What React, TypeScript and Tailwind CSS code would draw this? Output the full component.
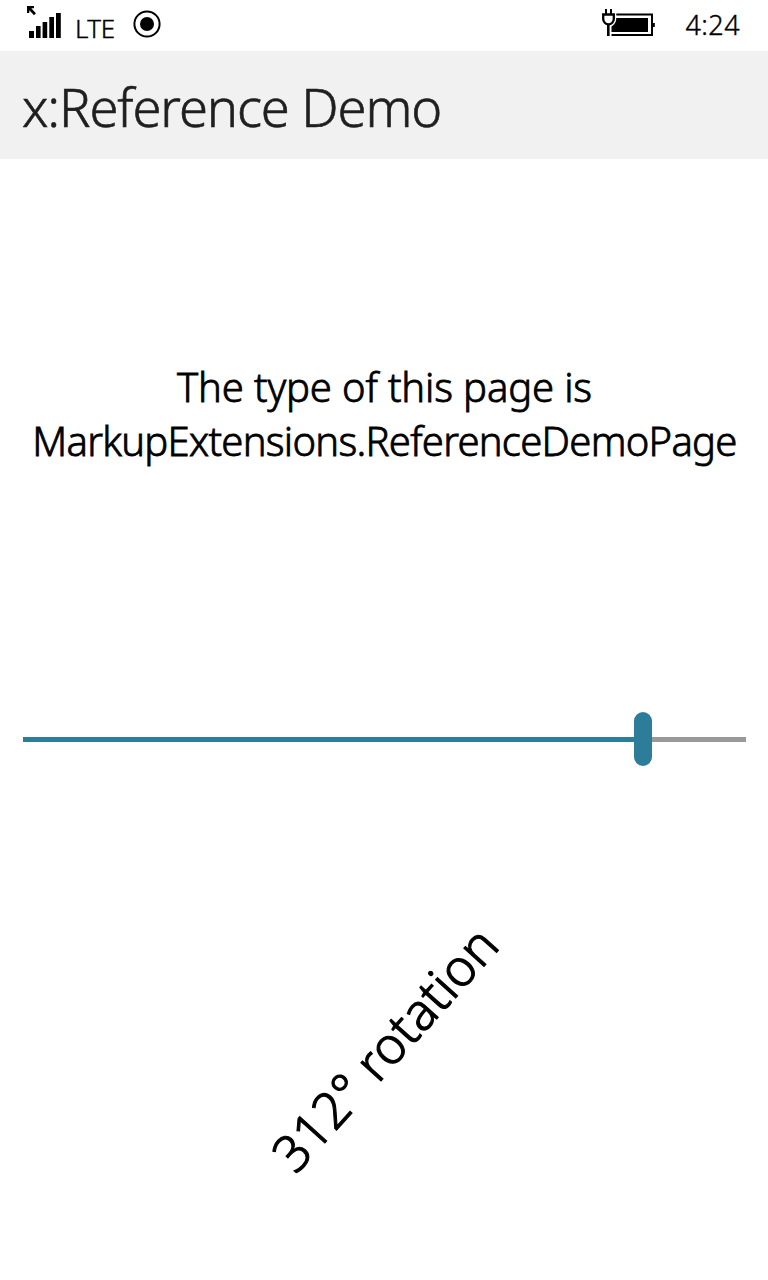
function SignalIcon() {
  return (
    <svg width="36" height="34" viewBox="0 0 36 34" fill="#000">
      <path d="M1 0H8V2.3H5.3L9.9 7.3L8 9.2L3.3 4.2V7H1Z" />
      <path d="M3 25h5v7H3zM10 20h4.6v12H10zM16.6 16h4.6v16h-4.6zM23.3 11h4.7v21h-4.7zM30 7h4.8v25H30z" />
    </svg>
  );
}

function RecordIcon() {
  return (
    <svg width="28" height="28" viewBox="0 0 28 28">
      <circle cx="14" cy="14" r="12.6" fill="none" stroke="#000" strokeWidth="2" />
      <circle cx="14" cy="14" r="7" fill="#000" />
    </svg>
  );
}

function BatteryIcon() {
  return (
    <svg width="53" height="28" viewBox="0 0 53 28" fill="none" stroke="#000" strokeWidth="2">
      <path d="M4 0v5M9 0v5" />
      <path d="M6.3 16v11" strokeWidth="2.6" />
      <path d="M1.2 5.5H11.8V10a5.3 5.3 0 0 1-10.6 0Z" strokeWidth="2.3" />
      <path d="M14.3 5.5H50V26H9.5" />
      <path d="M14.3 9H46V23H9.5V17.4C12.3 15.5 14.1 14 14.3 9Z" fill="#000" stroke="none" />
      <path d="M50.5 14h2.3v4h-2.3z" fill="#000" stroke="none" />
    </svg>
  );
}

export default function App() {
  return (
    <div className="flex h-[1280px] w-[768px] flex-col overflow-hidden bg-white font-['Noto_Sans',sans-serif] text-black">
      <div className="flex h-[51px] shrink-0 items-start justify-between pl-[26px] pr-[28px]">
        <div className="flex items-start">
          <div className="pt-[6px]"><SignalIcon /></div>
          <span className="ml-[13px] mt-[9px] w-[46px] text-[26px] leading-[38px] font-light tracking-[-0.5px] [-webkit-text-stroke:0.4px_#000]">LTE</span>
          <div className="ml-[12px] pt-[10px]"><RecordIcon /></div>
        </div>
        <div className="flex items-start">
          <div className="pt-[9px]"><BatteryIcon /></div>
          <span className="ml-[31px] mt-[6px] text-[27px] leading-[38px] font-light tracking-[0.4px] whitespace-nowrap [-webkit-text-stroke:0.4px_#000]">4:24</span>
        </div>
      </div>
      <header className="flex h-[108px] shrink-0 items-center bg-[#f1f1f1] pl-[22px]">
        <h1 className="mt-[4px] text-[52.5px] leading-[72px] font-light tracking-[-1.1px] whitespace-nowrap text-[#1f1f1f] [-webkit-text-stroke:0.6px_#1f1f1f]">x:Reference Demo</h1>
      </header>
      <main className="flex grow flex-col">
        <div className="flex h-[510px] items-center justify-center pl-[1px] text-center text-[40px] leading-[54px] font-light [-webkit-text-stroke:0.8px_#000]">
          <div className="flex flex-col items-center whitespace-nowrap">
            <span className="tracking-[-0.15px]">The type of this page is</span>
            <span className="tracking-[-0.72px]">MarkupExtensions.ReferenceDemoPage</span>
          </div>
        </div>
        <div className="ml-[23px] mt-[43px] flex h-[54px] items-center">
          <div className="h-[5px] w-[611px] bg-[#2d7d9a]" />
          <div className="h-[54px] w-[18px] rounded-full bg-[#2d7d9a]" />
          <div className="h-[5px] w-[94px] bg-[#999]" />
        </div>
        <div className="flex grow items-center justify-center pt-[49px]">
          <span className="-rotate-48 text-[51px] leading-[68px] font-light tracking-[0.1px] whitespace-nowrap [-webkit-text-stroke:1.1px_#000]">312° rotation</span>
        </div>
      </main>
    </div>
  );
}
